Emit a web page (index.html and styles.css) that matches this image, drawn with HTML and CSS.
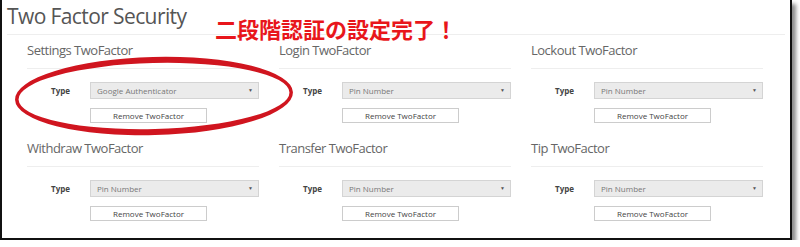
FILE: index.html
```html
<!DOCTYPE html>
<html lang="ja">
<head>
  <meta charset="UTF-8" />
  <meta name="viewport" content="width=device-width, initial-scale=1.0" />
  <title>Two Factor Security</title>
  <link rel="stylesheet" href="styles.css">
</head>
<body>
  <div class="panel">
    <h2 class="panel-title">Two Factor Security</h2>

    <div class="sections">
      <div class="section">
        <h3>Settings TwoFactor</h3>
        <div class="form-row">
          <label>Type</label>
          <span class="select-wrap">
            <select><option>Google Authenticator</option></select>
          </span>
        </div>
        <div class="actions"><button type="button">Remove TwoFactor</button></div>
      </div>

      <div class="section">
        <h3>Login TwoFactor</h3>
        <div class="form-row">
          <label>Type</label>
          <span class="select-wrap">
            <select><option>Pin Number</option></select>
          </span>
        </div>
        <div class="actions"><button type="button">Remove TwoFactor</button></div>
      </div>

      <div class="section">
        <h3>Lockout TwoFactor</h3>
        <div class="form-row">
          <label>Type</label>
          <span class="select-wrap">
            <select><option>Pin Number</option></select>
          </span>
        </div>
        <div class="actions"><button type="button">Remove TwoFactor</button></div>
      </div>

      <div class="section">
        <h3>Withdraw TwoFactor</h3>
        <div class="form-row">
          <label>Type</label>
          <span class="select-wrap">
            <select><option>Pin Number</option></select>
          </span>
        </div>
        <div class="actions"><button type="button">Remove TwoFactor</button></div>
      </div>

      <div class="section">
        <h3>Transfer TwoFactor</h3>
        <div class="form-row">
          <label>Type</label>
          <span class="select-wrap">
            <select><option>Pin Number</option></select>
          </span>
        </div>
        <div class="actions"><button type="button">Remove TwoFactor</button></div>
      </div>

      <div class="section">
        <h3>Tip TwoFactor</h3>
        <div class="form-row">
          <label>Type</label>
          <span class="select-wrap">
            <select><option>Pin Number</option></select>
          </span>
        </div>
        <div class="actions"><button type="button">Remove TwoFactor</button></div>
      </div>
    </div>

    <!-- annotation overlay -->
    <p class="note">二段階認証の設定完了！</p>
    <svg class="circle" width="800" height="247" viewBox="0 0 800 247">
      <path fill="#d0151f" fill-rule="evenodd" transform="rotate(-1.5 152 96)"
        d="M13 96a139 39 0 1 0 278 0a139 39 0 1 0 -278 0z
           M16.5 96a135.5 33 0 1 0 271 0a135.5 33 0 1 0 -271 0z" />
    </svg>
  </div>
</body>
</html>
```

FILE: styles.css
```css
* {
  box-sizing: border-box;
}

body {
  margin: 0;
  background: #fff;
  font-family: "Open Sans", Arial, sans-serif;
}

.panel {
  position: relative;
  width: 792px;
  height: 240px;
  padding: 0 5px;
  background: #fff;
  border: 2px solid #111;
  border-top: none;
  box-shadow: 4px 4px 4px rgba(0, 0, 0, 0.45);
}

.panel-title {
  margin: 0;
  padding: 2px 0 4px;
  font-size: 21px;
  line-height: 28px;
  font-weight: 400;
  letter-spacing: -0.6px;
  color: #555;
  border-bottom: 1px solid #eee;
}

.sections {
  display: grid;
  grid-template-columns: repeat(3, 252px);
  margin: 5px 0 0 10px;
}

.section {
  padding: 0 10px 15px;
}

.section h3 {
  margin: 0;
  padding-bottom: 8px;
  font-size: 13px;
  line-height: 20px;
  font-weight: 400;
  letter-spacing: -0.5px;
  color: #666;
  border-bottom: 1px solid #eee;
}

.form-row {
  display: grid;
  grid-template-columns: 63px 1fr;
  align-items: center;
  margin-top: 13px;
}

.form-row label {
  padding-right: 20px;
  text-align: right;
  font-size: 8px;
  font-weight: 700;
  color: #444;
}

.select-wrap {
  position: relative;
  display: block;
}

.select-wrap::after {
  content: "▼";
  position: absolute;
  right: 6px;
  top: 5px;
  font-size: 5px;
  color: #555;
}

select {
  display: block;
  width: 100%;
  height: 17px;
  padding: 0 6px;
  margin: 0;
  appearance: none;
  -webkit-appearance: none;
  border: 1px solid #d4d4d4;
  border-radius: 0;
  background: #ebebeb;
  font-family: "Open Sans", Arial, sans-serif;
  font-size: 8px;
  color: #777;
}

.actions {
  margin-top: 9px;
  padding-left: 63px;
}

button {
  display: block;
  width: 117px;
  height: 15px;
  padding: 0;
  border: 1px solid #ccc;
  background: #fff;
  font-family: "Open Sans", Arial, sans-serif;
  font-size: 8px;
  color: #444;
}

.note {
  position: absolute;
  left: 213px;
  top: 19px;
  margin: 0;
  font-family: "Noto Sans CJK JP", sans-serif;
  font-size: 22px;
  line-height: 18px;
  font-weight: 700;
  color: #e8161b;
}

.circle {
  position: absolute;
  left: 0;
  top: 0;
  pointer-events: none;
}
```
